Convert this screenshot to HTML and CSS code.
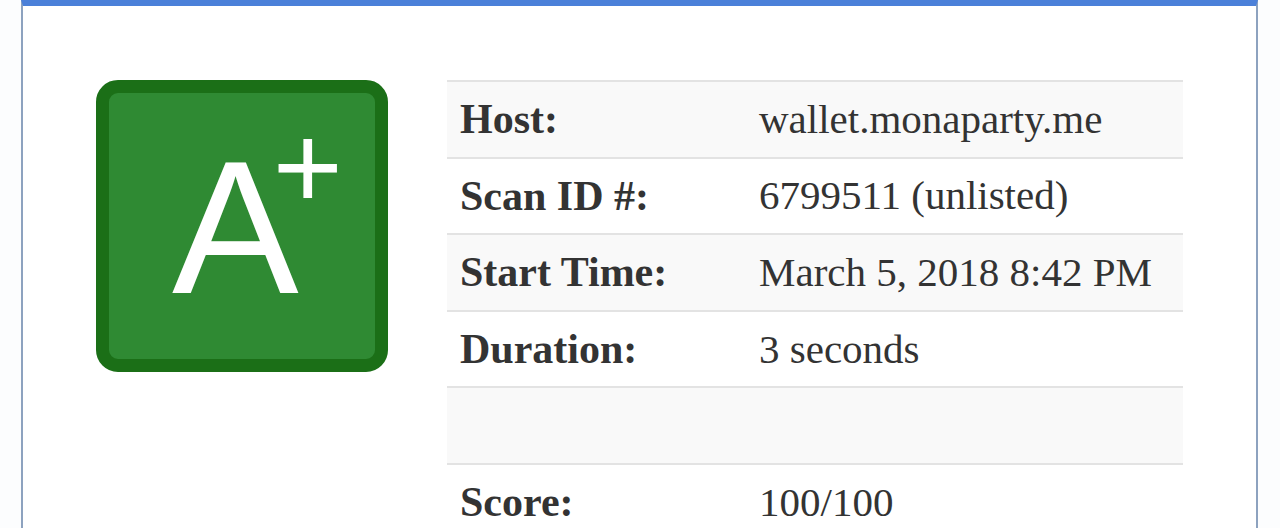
FILE: index.html
```html
<!DOCTYPE html>
<html lang="en">
<head>
<meta charset="utf-8">
<title>Scan summary</title>
<link rel="stylesheet" href="styles.css">
</head>
<body>
<div class="page">
  <section class="card">
    <div class="grade">
      <span class="letter">A</span><span class="plus">+</span>
    </div>
    <div class="summary">
      <div class="row"><div class="label">Host:</div><div class="value">wallet.monaparty.me</div></div>
      <div class="row"><div class="label">Scan ID #:</div><div class="value">6799511 (unlisted)</div></div>
      <div class="row"><div class="label">Start Time:</div><div class="value">March 5, 2018 8:42 PM</div></div>
      <div class="row"><div class="label">Duration:</div><div class="value">3 seconds</div></div>
      <div class="row"><div class="label"></div><div class="value"></div></div>
      <div class="row"><div class="label">Score:</div><div class="value">100/100</div></div>
    </div>
  </section>
</div>
</body>
</html>
```
FILE: styles.css
```css
html, body {
  margin: 0;
  padding: 0;
  background: #fcfdfe;
  overflow: hidden;
}
.page {
  padding: 0 22px 0 21px;
  height: 528px;
}
.card {
  box-sizing: border-box;
  min-height: 700px;
  background: #ffffff;
  border: 2px solid #8da2bf;
  border-top: 6px solid #4b80d9;
  padding: 74px 73px 0 73px;
  display: flex;
  align-items: flex-start;
  gap: 59px;
}
.grade {
  box-sizing: border-box;
  flex: 0 0 292px;
  height: 292px;
  background: #2f8a33;
  border: 13px solid #1b6f17;
  border-radius: 22px;
  display: flex;
  align-items: flex-start;
  padding: 39px 0 0 63px;
  color: #ffffff;
  font-family: "Liberation Sans", Arial, sans-serif;
}
.letter {
  font-size: 190px;
  line-height: 1;
}
.plus {
  font-size: 120px;
  line-height: 1;
  margin: -25px 0 0 -26px;
}
.summary {
  flex: 1;
  font-family: "Liberation Serif", "Times New Roman", serif;
  color: #333333;
}
.row {
  box-sizing: border-box;
  height: 76.6px;
  border-top: 2px solid #e3e3e3;
  display: grid;
  grid-template-columns: 299px 1fr;
  align-items: center;
  font-size: 41px;
  line-height: 1.15;
}
.row:nth-child(odd) {
  background: #f9f9f9;
}
.label,
.value {
  padding: 0 13px;
}
.label {
  font-weight: bold;
  font-size: 42px;
}
```
